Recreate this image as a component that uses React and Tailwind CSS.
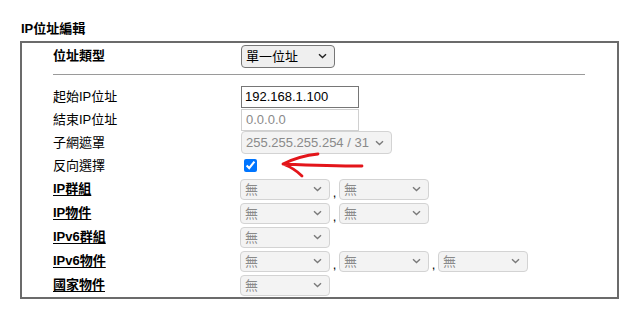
const font = { fontFamily: '"Liberation Sans", "Noto Sans CJK TC", sans-serif' };

const Chevron = ({ color = "#333" }) => (
  <svg width="9" height="6" viewBox="0 0 9 6" className="shrink-0">
    <path d="M1 1.2 L4.5 4.5 L8 1.2" fill="none" stroke={color} strokeWidth="1.4" />
  </svg>
);

const FakeSelect = ({ text, width, height = "h-[21px]", disabled = true }) => (
  <div
    className={`flex items-center justify-between rounded-[4px] border pl-[4px] pr-[7px] text-[13px] ${height} ${
      disabled
        ? "border-[#d3d3d3] bg-[#f3f3f3] text-[#8a8a8a]"
        : "border-[#767676] bg-[#efefef] text-black"
    }`}
    style={{ width }}
  >
    <span className="leading-none">{text}</span>
    <Chevron color={disabled ? "#7a7a7a" : "#222"} />
  </div>
);

const Comma = () => <span className="w-[9px] self-end text-center text-[13px] leading-[14px]">,</span>;

const linkRows = [
  { label: "IP群組", count: 2 },
  { label: "IP物件", count: 2 },
  { label: "IPv6群組", count: 1 },
  { label: "IPv6物件", count: 3 },
  { label: "國家物件", count: 1 },
];

export default function App() {
  return (
    <div className="relative h-[309px] w-[631px] bg-white px-[20px] pt-[19px] text-black" style={font}>
      <div className="h-[22px] pl-px text-[13px] font-bold leading-[20px]">IP位址編輯</div>
      <div className="w-[599px] border-2 border-[#6b6b6b] pl-[31px]">
        <div className="flex h-[26px] items-center">
          <div className="w-[188px] text-[13px] font-bold">位址類型</div>
          <FakeSelect text="單一位址" width={94} height="h-[23px]" disabled={false} />
        </div>
        <div className="mt-[5px] mb-[10px] h-px w-[532px] bg-[#9a9a9a]" />
        <div className="flex h-[23px] items-center">
          <div className="w-[188px] text-[13px]">起始IP位址</div>
          <div className="flex h-[22px] w-[118px] items-center border border-[#767676] pl-[3px] text-[13px]">
            192.168.1.100
          </div>
        </div>
        <div className="flex h-[23px] items-center">
          <div className="w-[188px] text-[13px]">結束IP位址</div>
          <div className="flex h-[22px] w-[118px] items-center border border-[#d0d0d0] pl-[4px] text-[13px] text-[#8a8a8a]">
            0.0.0.0
          </div>
        </div>
        <div className="flex h-[23px] items-center">
          <div className="w-[188px] text-[13px]">子網遮罩</div>
          <FakeSelect text="255.255.255.254 / 31" width={151} height="h-[23px]" />
        </div>
        <div className="flex h-[23px] items-center">
          <div className="w-[191px] text-[13px]">反向選擇</div>
          <input type="checkbox" checked readOnly className="m-0 h-[13px] w-[13px]" />
        </div>
        {linkRows.map((row) => (
          <div key={row.label} className="flex h-[24px] items-center">
            <div className="w-[187px] text-[13px] font-bold underline underline-offset-2">{row.label}</div>
            <div className="flex items-center">
              {Array.from({ length: row.count }).map((_, i) => (
                <div key={i} className="flex">
                  {i > 0 && <Comma />}
                  <FakeSelect text="無" width={90} />
                </div>
              ))}
            </div>
          </div>
        ))}
      </div>
      <svg className="absolute left-[277px] top-[150px]" width="90" height="30" viewBox="0 0 90 30">
        <path
          d="M41 4 C31 5 16 9 6 14 C14 17 20 21 25 26 M6 14 C30 15 60 16 85 16"
          fill="none"
          stroke="#e3151a"
          strokeWidth="2.8"
          strokeLinecap="round"
          strokeLinejoin="round"
        />
      </svg>
    </div>
  );
}
